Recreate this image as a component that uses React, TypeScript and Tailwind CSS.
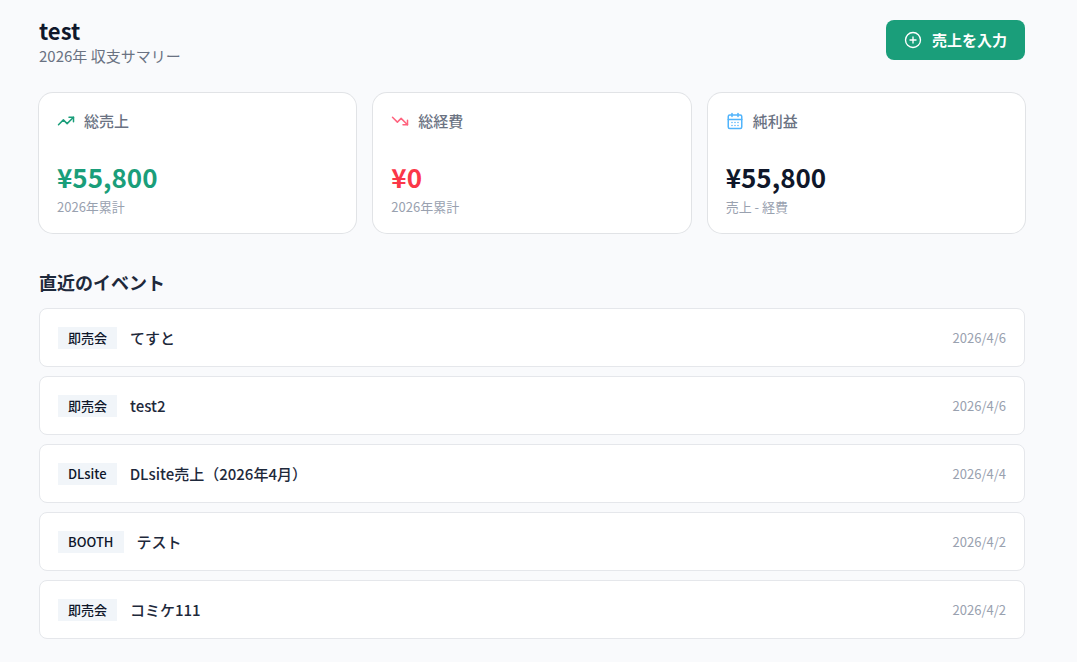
import { CalendarDays, CirclePlus, TrendingDown, TrendingUp } from "lucide-react";

interface SaleEvent {
  id: number;
  type: string;
  name: string;
  date: string;
}

const SUMMARY = [
  {
    title: "総売上",
    value: 55800,
    note: "2026年累計",
    icon: TrendingUp,
    iconClass: "text-[#1a9e7a]",
    valueClass: "text-[#1a9e7a]",
  },
  {
    title: "総経費",
    value: 0,
    note: "2026年累計",
    icon: TrendingDown,
    iconClass: "text-[#ff637e]",
    valueClass: "text-[#fb3748]",
  },
  {
    title: "純利益",
    value: 55800,
    note: "売上 - 経費",
    icon: CalendarDays,
    iconClass: "text-[#51b4fb]",
    valueClass: "text-[#0f172a]",
  },
];

const EVENTS: SaleEvent[] = [
  { id: 1, type: "即売会", name: "てすと", date: "2026/4/6" },
  { id: 2, type: "即売会", name: "test2", date: "2026/4/6" },
  { id: 3, type: "DLsite", name: "DLsite売上（2026年4月）", date: "2026/4/4" },
  { id: 4, type: "BOOTH", name: "テスト", date: "2026/4/2" },
  { id: 5, type: "即売会", name: "コミケ111", date: "2026/4/2" },
];

export default function App() {
  return (
    <main
      lang="ja"
      className="min-h-screen bg-[#f9fafc] pt-[14px] pr-[52px] pb-6 pl-[39px] font-['Noto_Sans_CJK_JP',sans-serif] text-[#0f172a]"
    >
      {/* Header */}
      <header className="flex items-center justify-between">
        <div>
          <h1 className="text-[22px] leading-8 font-bold">test</h1>
          <p className="text-[15px] leading-5 text-gray-500">2026年 収支サマリー</p>
        </div>
        <button
          type="button"
          className="flex h-10 items-center gap-[10px] rounded-lg bg-[#1a9e7a] px-[18px] text-[15px] font-bold text-white"
        >
          <CirclePlus size={18} strokeWidth={1.8} />
          売上を入力
        </button>
      </header>

      {/* Summary cards */}
      <section className="mt-[27px] grid grid-cols-3 gap-[17px]">
        {SUMMARY.map(({ title, value, note, icon: Icon, iconClass, valueClass }) => (
          <div key={title} className="rounded-[14px] bg-white p-[18px] ring-1 ring-[#e1e3e6]">
            <h2 className="flex items-center gap-[9px] text-[15px] leading-5 font-medium text-gray-500">
              <Icon size={18} strokeWidth={2} className={iconClass} />
              {title}
            </h2>
            <p className={`mt-6 text-[26px] leading-[44px] font-bold ${valueClass}`}>
              ¥{value.toLocaleString("en-US")}
            </p>
            <p className="text-[13px] leading-4 text-gray-400">{note}</p>
          </div>
        ))}
      </section>

      {/* Recent events */}
      <section className="mt-9">
        <h2 className="text-[18px] leading-[26px] font-bold text-[#1e293b]">直近のイベント</h2>
        <ul className="mt-[13px] space-y-[9px]">
          {EVENTS.map((event) => (
            <li
              key={event.id}
              className="flex items-center justify-between rounded-lg border border-gray-200 bg-white px-[18px] pt-[18px] pb-[17px]"
            >
              <div className="flex items-center gap-[13px]">
                <span className="bg-slate-100 px-[10px] text-[13px] leading-[22px] font-medium">{event.type}</span>
                <span className="text-[15px] leading-[22px] font-medium text-[#1e293b]">{event.name}</span>
              </div>
              <time className="text-[13px] leading-[22px] text-gray-400">{event.date}</time>
            </li>
          ))}
        </ul>
      </section>
    </main>
  );
}
